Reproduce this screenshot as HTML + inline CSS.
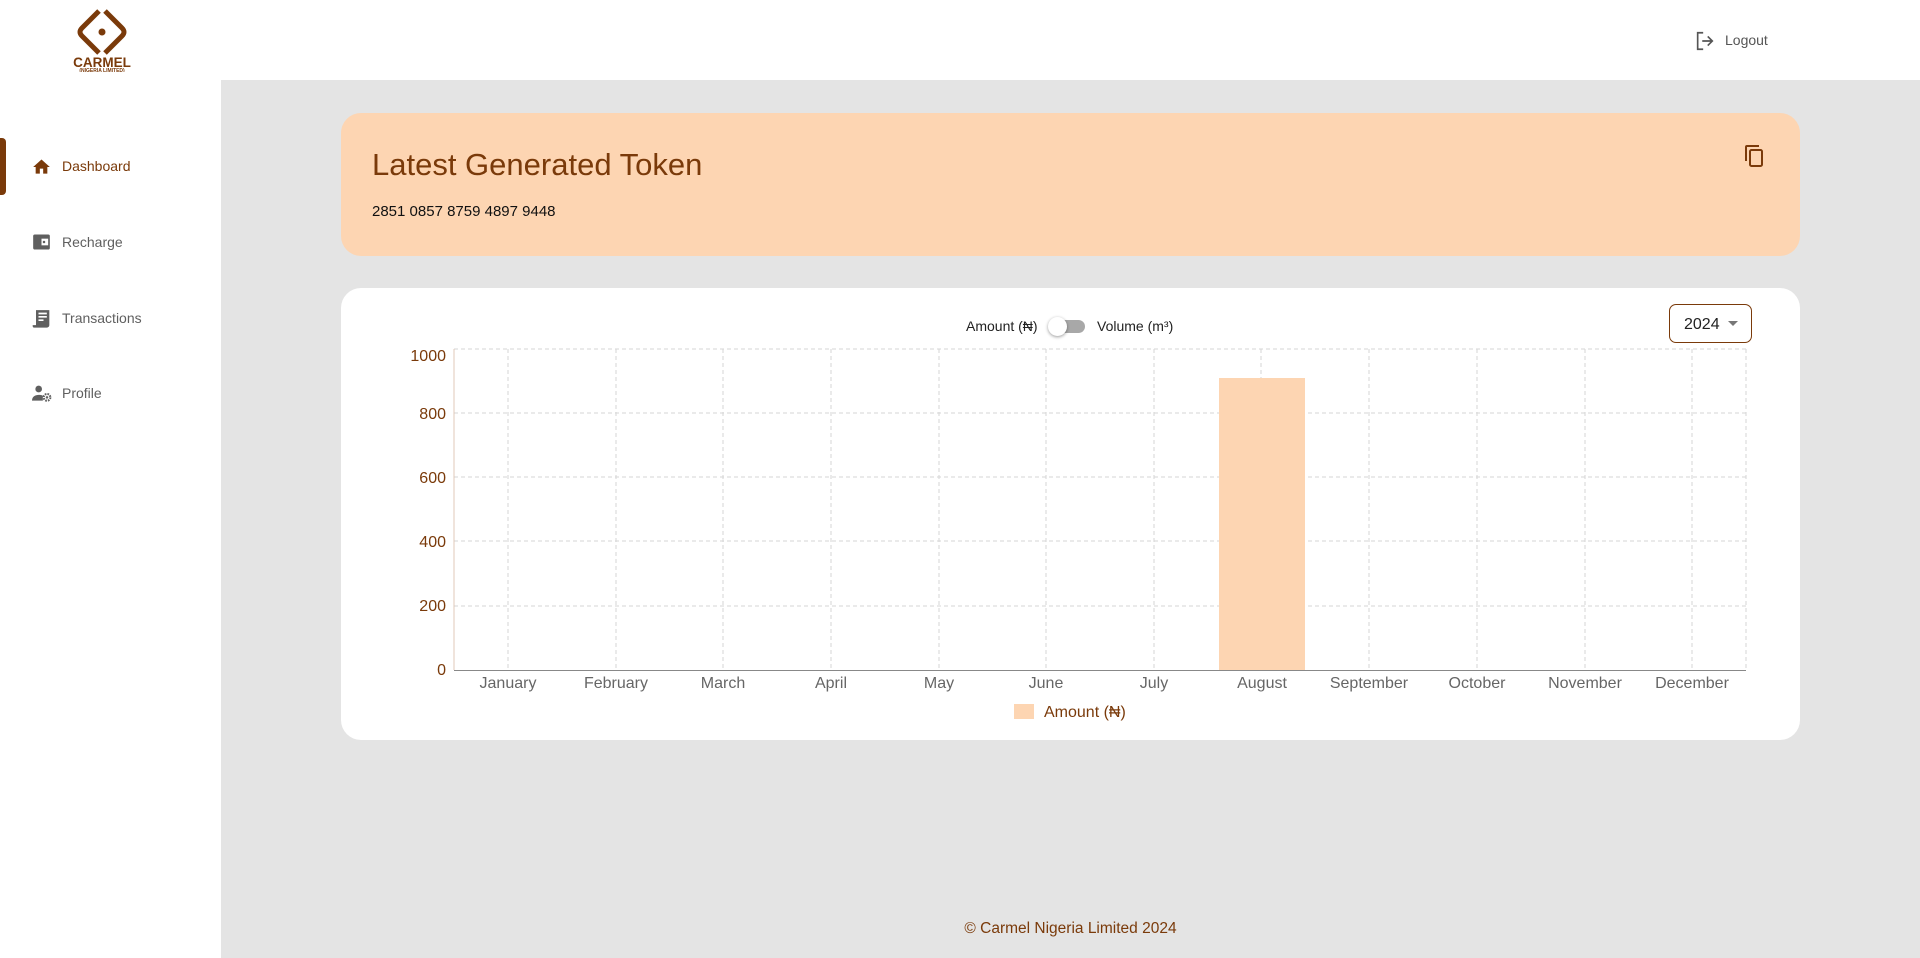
<!DOCTYPE html><html><head><style>
body{margin:0;width:1920px;height:958px;font-family:"Liberation Sans",sans-serif;background:#fff;position:relative;overflow:hidden}
.abs{position:absolute}
.main{left:221px;top:80px;width:1699px;height:878px;background:#e4e4e4}
.nav{left:62px;font-size:14px;color:#5f5f5f}
.card{background:#fdd5b2;left:341px;top:113px;width:1459px;height:143px;border-radius:20px}
.chart{background:#fff;left:341px;top:288px;width:1459px;height:452px;border-radius:20px}
.yl{right:1474px;font-size:16px;color:#7a3a0a;text-align:right;width:60px}
.xl{font-size:16px;color:#666;width:108px;text-align:center;top:675px}
</style></head><body>
<svg class="abs" style="left:70px;top:8px" width="64" height="64" viewBox="0 0 64 64">
<path d="M29 3 L12 20 Q8 24 12 28 L29 45" fill="none" stroke="#7a3a0a" stroke-width="5"/>
<path d="M35 3 L52 20 Q56 24 52 28 L35 45" fill="none" stroke="#7a3a0a" stroke-width="5"/>
<circle cx="32" cy="24" r="3.5" fill="#7a3a0a"/>
<text x="32" y="59" font-size="13.5" font-weight="bold" fill="#7a3a0a" text-anchor="middle" font-family="Liberation Sans">CARMEL</text>
<text x="32" y="64" font-size="5" font-weight="bold" fill="#7a3a0a" text-anchor="middle" font-family="Liberation Sans">(NIGERIA LIMITED)</text></svg>
<svg class="abs" style="left:1694px;top:30px" width="22" height="22" viewBox="0 0 24 24"><path d="M10 3H4v18h6M15 7l5 5-5 5M20 12H9" fill="none" stroke="#555" stroke-width="1.8"/></svg>
<div class="abs" style="left:1725px;top:32px;font-size:14px;color:#555">Logout</div>
<div class="abs" style="left:0;top:138px;width:6px;height:57px;background:#7a3a0a;border-radius:0 4px 4px 0"></div>
<svg class="abs" style="left:31px;top:157px" width="21" height="20" viewBox="0 0 24 24"><path d="M10 20v-6h4v6h5v-8h3L12 3 2 12h3v8z" fill="#7a3a0a"/></svg>
<div class="abs nav" style="top:158px;color:#7a3a0a">Dashboard</div>
<svg class="abs" style="left:31px;top:232px" width="21" height="20" viewBox="0 0 24 24"><rect x="2" y="3" width="20" height="18" rx="2" fill="#5f5f5f"/><rect x="12" y="8" width="8" height="8" fill="#fff"/><circle cx="15" cy="12" r="1.5" fill="#5f5f5f"/></svg>
<div class="abs nav" style="top:234px">Recharge</div>
<svg class="abs" style="left:31px;top:308px" width="20" height="21" viewBox="0 0 24 24"><path d="M6 2h16v18a3 3 0 0 1-3 3H3a3 3 0 0 1-1-3h4z" fill="#5f5f5f"/><path d="M9 6h10M9 10h10M9 14h6" stroke="#fff" stroke-width="2"/></svg>
<div class="abs nav" style="top:310px">Transactions</div>
<svg class="abs" style="left:31px;top:384px" width="22" height="20" viewBox="0 0 24 24"><circle cx="8" cy="6" r="4" fill="#5f5f5f"/><path d="M0 20c0-5 4-7 8-7s5 1 5 1v6z" fill="#5f5f5f"/><circle cx="18" cy="16" r="4" fill="none" stroke="#5f5f5f" stroke-width="2.5" stroke-dasharray="2 1.2"/><circle cx="18" cy="16" r="1.5" fill="#5f5f5f"/></svg>
<div class="abs nav" style="top:385px">Profile</div>
<div class="abs main"></div>
<div class="abs card"></div>
<div class="abs" style="left:372px;top:147px;font-size:31px;color:#7a3a0a">Latest Generated Token</div>
<div class="abs" style="left:372px;top:203px;font-size:15px;color:#111">2851 0857 8759 4897 9448</div>
<svg class="abs" style="left:1743px;top:143px" width="24" height="26" viewBox="0 0 24 24"><path d="M16 1H4a2 2 0 0 0-2 2v14h2V3h12z" fill="#7a3a0a"/><rect x="7" y="6" width="12" height="16" rx="1.5" fill="none" stroke="#7a3a0a" stroke-width="2"/></svg>
<div class="abs chart"></div>
<div class="abs" style="left:966px;top:318px;font-size:14px;color:#222">Amount (₦)</div>
<div class="abs" style="left:1055px;top:320px;width:30px;height:13px;border-radius:7px;background:#a8a8a8"></div>
<div class="abs" style="left:1048px;top:317px;width:19px;height:19px;border-radius:50%;background:#fff;box-shadow:0 1px 3px rgba(0,0,0,.4)"></div>
<div class="abs" style="left:1097px;top:318px;font-size:14px;color:#222">Volume (m³)</div>
<div class="abs" style="left:1669px;top:304px;width:83px;height:39px;border:1px solid #7a3a0a;border-radius:7px;box-sizing:border-box"></div>
<div class="abs" style="left:1684px;top:316px;font-size:16px;color:#222">2024</div>
<div class="abs" style="left:1728px;top:321px;width:0;height:0;border:5px solid transparent;border-top-color:#777"></div>
<svg class="abs" style="left:0;top:0" width="1920" height="958">
<g stroke="#d6d6d6" stroke-dasharray="4 3" fill="none">
<path d="M454 349H1746M454 413H1746M454 477H1746M454 541H1746M454 606H1746"/>
<path d="M508 349V670M616 349V670M723 349V670M831 349V670M939 349V670M1046 349V670M1154 349V670M1261 349V670M1369 349V670M1477 349V670M1585 349V670M1692 349V670M1746 349V670M454 349V670"/>
</g>
<rect x="1219" y="378" width="86" height="292" fill="#fdd5b2"/>
<path d="M454 670.5H1746" stroke="#888"/>
<path d="M454 349V670" stroke="#e0c8b8"/>
<rect x="1014" y="704" width="20" height="15" fill="#fdd5b2"/>
<text x="1044" y="717" font-size="16" fill="#7a3a0a" font-family="Liberation Sans">Amount (₦)</text>
</svg>
<div class="abs yl" style="top:348px">1000</div>
<div class="abs yl" style="top:406px">800</div>
<div class="abs yl" style="top:470px">600</div>
<div class="abs yl" style="top:534px">400</div>
<div class="abs yl" style="top:598px">200</div>
<div class="abs yl" style="top:662px">0</div>
<div class="abs xl" style="left:454px">January</div>
<div class="abs xl" style="left:562px">February</div>
<div class="abs xl" style="left:669px">March</div>
<div class="abs xl" style="left:777px">April</div>
<div class="abs xl" style="left:885px">May</div>
<div class="abs xl" style="left:992px">June</div>
<div class="abs xl" style="left:1100px">July</div>
<div class="abs xl" style="left:1208px">August</div>
<div class="abs xl" style="left:1315px">September</div>
<div class="abs xl" style="left:1423px">October</div>
<div class="abs xl" style="left:1531px">November</div>
<div class="abs xl" style="left:1638px">December</div>
<div class="abs" style="left:221px;width:1699px;top:920px;text-align:center;font-size:15.5px;color:#7a3a0a">© Carmel Nigeria Limited 2024</div>
</body></html>
